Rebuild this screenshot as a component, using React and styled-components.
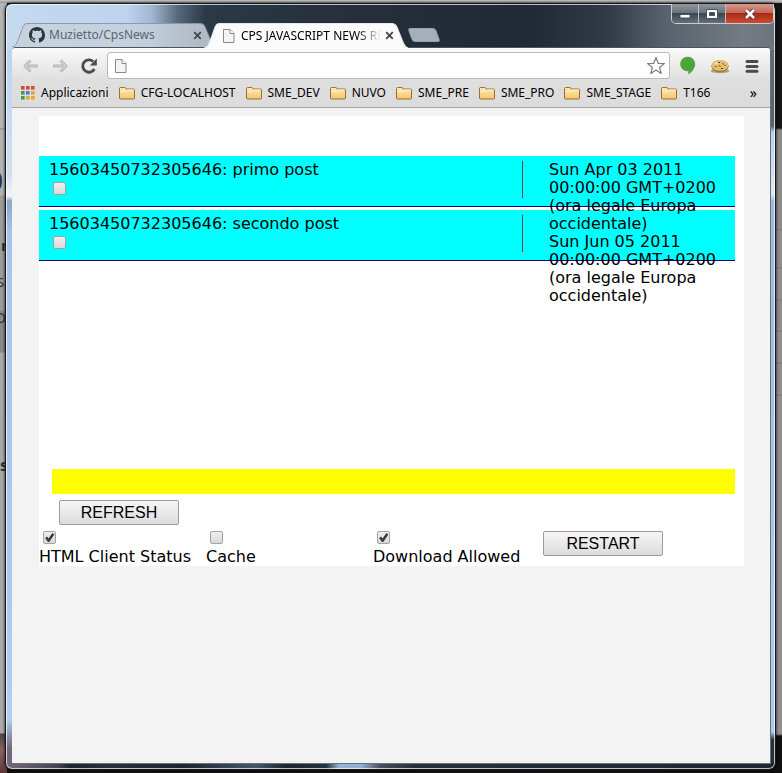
import React from "react";
import styled, { createGlobalStyle, css } from "styled-components";

const GlobalStyle = createGlobalStyle`
  *, *::before, *::after { box-sizing: border-box; }
  body { margin: 0; }
  button, input { font: inherit; color: inherit; }
`;

const ui = `"Noto Sans", "Open Sans", sans-serif`;
const verdana = `Verdana, "DejaVu Sans", sans-serif`;

const Desktop = styled.div`
  position: relative;
  display: flex;
  min-height: 100vh;
  padding: 3px 6px 3px 5px;
  overflow: hidden;
  font: 12px/16px ${ui};
  color: #000;
  background:
    linear-gradient(#c8c8c8, #8f8f8f) top / 100% 3px no-repeat,
    linear-gradient(
      #151515 0 128px, #8b8b8b 130px 229px, #777 230px, #8e8e8e 231px 267px, #777 268px,
      #909090 269px 299px, #777 300px, #8e8e8e 301px 330px, #777 331px, #909090 332px 362px,
      #777 363px, #8e8e8e 364px 394px, #777 395px, #909090 396px 734px, #101010 736px
    ) right / 7px 100% no-repeat,
    linear-gradient(
      #b5b5b5 0 128px, #8a8a8a 129px, #b4b4b4 130px 195px, #9c9c9c 196px 310px,
      #8a8a8a 311px 352px, #a9a9a9 353px 733px, #4b4545 734px, #8b6562 750px, #5d3535 773px
    ) left / 7px 100% no-repeat,
    #111;
`;

const Fragment = styled.span`
  position: absolute;
  left: ${(p) => p.$x}px;
  top: ${(p) => p.$y}px;
  font-size: ${(p) => p.$size}px;
  line-height: ${(p) => p.$size}px;
  font-weight: ${(p) => (p.$bold ? 700 : 400)};
  color: #333;
`;

const Window = styled.main`
  position: relative;
  flex: 1;
  min-width: 0;
  display: flex;
  flex-direction: column;
  border: 1px solid #15191e;
  border-radius: 7px;
  box-shadow: inset 0 0 0 1px rgba(255, 255, 255, 0.7), 0 0 3px #000;
  background:
    linear-gradient(
      90deg, #c5d9ef 0, #bed4ee 120px, #a3b9d3 145px, #56687b 172px, #2b3846 200px,
      #27323e 300px, #202935 520px, #303a46 600px, #59636e 660px, #747b83 740px, #6b737b 100%
    ) top / 100% 46px no-repeat,
    linear-gradient(
      90deg, #77697b 0, #4b4454 50px, #1c2530 65px, #27323e 100px, #1b2630 180px, #46586b 250px,
      #1b2630 280px, #24303c 320px, #93b3d6 333px 355px, #4b4a58 375px, #24303c 410px, #1d2833 100%
    ) bottom / 100% 7px no-repeat,
    linear-gradient(
      #bcd3ee 46px, #d0e0f2 170px, #f0f5fa 192px, #8da7c6 197px, #a8c4e6 230px,
      #acc9eb 600px, #b0d0ef 715px, #6f677a 745px
    ) left / 7px 100% no-repeat,
    linear-gradient(
      #626b74 46px, #59636d 122px, #b5cfea 128px, #dfeaf6 190px, #9db9dd 197px,
      #abc9ea 600px, #a9cbe9 728px, #25313c 736px
    ) right / 7px 100% no-repeat;
`;

const TitleBar = styled.header`
  display: flex;
  align-items: flex-end;
  height: 43px;
  padding: 0 1px 0 6px;
`;

const Tabs = styled.nav`
  display: flex;
  align-items: flex-end;
`;

const Tab = styled.div`
  position: relative;
  z-index: ${(p) => (p.$active ? 1 : 0)};
  display: flex;
  align-items: center;
  width: 204px;
  height: ${(p) => (p.$active ? 25 : 24)}px;
  margin: 0 -12px ${(p) => (p.$active ? -1 : 0)}px 0;
  padding: 0 11px 0 17px;
  color: ${(p) => (p.$active ? "#000" : "#5b6670")};
`;

const TabShape = styled.svg`
  position: absolute;
  inset: 0;
  width: 100%;
  height: 100%;
`;

const TabTitle = styled.button`
  position: relative;
  flex: 1;
  min-width: 0;
  display: flex;
  align-items: center;
  gap: 4px;
  padding: 0;
  border: 0;
  background: none;
  text-align: left;
  svg { flex: none; }
  span {
    flex: 1;
    overflow: hidden;
    white-space: nowrap;
    ${(p) =>
      p.$fade &&
      css`mask-image: linear-gradient(90deg, #000 calc(100% - 24px), transparent);`}
  }
`;

const IconButton = styled.button`
  position: relative;
  flex: none;
  display: flex;
  align-items: center;
  justify-content: center;
  width: ${(p) => p.$w || 16}px;
  height: ${(p) => p.$h || 16}px;
  padding: 0;
  border: 0;
  background: none;
`;

const NewTab = styled.button`
  width: 28px;
  height: 14px;
  margin: 0 0 5px 14px;
  padding: 0;
  border: 1px solid #9aa3ad;
  border-radius: 3px;
  background: #a6afb9;
  transform: skewX(20deg);
`;

const Controls = styled.div`
  display: flex;
  align-self: flex-start;
  margin-left: auto;
  height: 20px;
  border: 1px solid #c9ced3;
  border-top: 0;
  border-radius: 0 0 5px 5px;
  overflow: hidden;
`;

const Control = styled.button`
  display: flex;
  align-items: center;
  justify-content: center;
  width: ${(p) => (p.$danger ? 47 : 27)}px;
  padding: 0;
  border: 0;
  border-right: ${(p) => (p.$danger ? 0 : 1)}px solid #b9bfc5;
  background: ${(p) =>
    p.$danger
      ? "linear-gradient(#d79a8c, #c4685a 45%, #a92a17 50%, #cc4c31)"
      : "linear-gradient(#9097a0, #6b737d 45%, #3d4650 50%, #66707a)"};
`;

const Browser = styled.section`
  flex: 1;
  display: flex;
  flex-direction: column;
  margin: 0 4px 5px 6px;
  border: 1px solid #67717b;
  border-left-width: 0;
  border-top-color: #4b535c;
  border-radius: 4px 4px 0 0;
  background: #f3f3f3;
`;

const Chrome = styled.div`
  border-bottom: 1px solid #a5a5a5;
  border-radius: 3px 3px 0 0;
  background: linear-gradient(#fafafa, #dedede 34px, #dcdcdc);
`;

const Toolbar = styled.div`
  display: flex;
  align-items: center;
  height: 35px;
  padding: 0 5px 0 7px;
`;

const Nav = styled.div`
  display: flex;
  gap: 5px;
  margin-right: 6px;
`;

const Omnibox = styled.label`
  flex: 1;
  display: flex;
  align-items: center;
  height: 27px;
  padding: 0 3px 0 5px;
  border: 1px solid #b9b9b9;
  border-radius: 3px;
  background: #fff;
  input {
    flex: 1;
    min-width: 0;
    border: 0;
    outline: 0;
    background: none;
  }
`;

const Extensions = styled.div`
  display: flex;
  align-items: center;
  margin-left: 5px;
`;

const Bookmarks = styled.nav`
  display: flex;
  align-items: center;
  gap: 10px;
  height: 24px;
  padding: 0 13px 4px 9px;
`;

const Bookmark = styled.a`
  display: flex;
  align-items: center;
  gap: 6px;
  color: #000;
  text-decoration: none;
  white-space: nowrap;
  svg { flex: none; }
`;

const More = styled.button`
  margin-left: auto;
  padding: 0;
  border: 0;
  background: none;
  font-size: 14px;
`;

const Panel = styled.article`
  margin: 8px 26px 8px 27px;
  padding-top: 40px;
  background: #fff;
  font: 16px/18px ${verdana};
`;

const PostList = styled.div`
  display: flow-root;
  min-height: 313px;
  margin-right: 9px;
`;

const Post = styled.section`
  height: 51px;
  margin-bottom: 3px;
  padding: 5px 0 0 10px;
  border-bottom: 1px solid #00008b;
  background: #0ff;
`;

const PostTitle = styled.label`
  display: block;
  height: 37px;
  margin-right: 212px;
  border-right: 1px solid #4b4b4b;
`;

const PostDate = styled.time`
  float: right;
  clear: right;
  width: 186px;
`;

const Check = styled.input`
  appearance: none;
  display: block;
  width: 13px;
  height: 13px;
  margin: ${(p) => (p.$inPost ? "3px 0 0 4px" : "0 0 4px 4px")};
  border: 1px solid #a3a3a3;
  border-radius: 2px;
  background: linear-gradient(#efefef, #d9d9d9);
  &:checked::before {
    content: "";
    display: block;
    height: 11px;
    background: #3b3b3b;
    clip-path: polygon(10% 55%, 28% 42%, 42% 58%, 76% 8%, 94% 22%, 48% 90%, 36% 90%);
  }
`;

const StatusBar = styled.div`
  height: 25px;
  margin: 0 9px 6px 13px;
  background: #ff0;
`;

const PushButton = styled.button`
  width: 120px;
  height: 25px;
  padding: 0;
  border: 1px solid #9c9c9c;
  border-radius: 2px;
  background: linear-gradient(#f6f6f6, #dcdcdc);
  font: 16px/18px Arial, "Liberation Sans", sans-serif;
`;

const Actions = styled.div`
  display: flex;
  padding: 0 20px 6px;
`;

const Options = styled.div`
  display: grid;
  grid-template-columns: 167px 167px 170px 120px;
  align-items: start;
`;

const Option = styled.label`
  white-space: nowrap;
`;

const PageIcon = ({ size = 16 }) => (
  <svg width={size} height={size} viewBox="0 0 16 16" fill="#f4f4f4" stroke="#8a8a8a">
    <path d="M2.5 1.5h6.5l4 4v9H2.5z" />
    <path d="M9 1.5v4h4" fill="#fff" />
  </svg>
);

const GithubIcon = () => (
  <svg width="16" height="16" viewBox="0 0 16 16" fill="#2c3540">
    <path d="M8 0C3.58 0 0 3.58 0 8c0 3.54 2.29 6.53 5.47 7.59.4.07.55-.17.55-.38 0-.19-.01-.82-.01-1.49-2.01.37-2.53-.49-2.69-.94-.09-.23-.48-.94-.82-1.13-.28-.15-.68-.52-.01-.53.63-.01 1.08.58 1.23.82.72 1.21 1.87.87 2.33.66.07-.52.28-.87.51-1.07-1.78-.2-3.64-.89-3.64-3.95 0-.87.31-1.59.82-2.15-.08-.2-.36-1.02.08-2.12 0 0 .67-.21 2.2.82.64-.18 1.32-.27 2-.27s1.36.09 2 .27c1.53-1.04 2.2-.82 2.2-.82.44 1.1.16 1.92.08 2.12.51.56.82 1.27.82 2.15 0 3.07-1.87 3.75-3.65 3.95.29.25.54.73.54 1.48 0 1.07-.01 1.93-.01 2.2 0 .21.15.46.55.38A8.01 8.01 0 0 0 16 8c0-4.42-3.58-8-8-8z" />
  </svg>
);

const CloseIcon = () => (
  <svg width="9" height="9" viewBox="0 0 9 9" stroke="#4a4a4a" strokeWidth="1.9">
    <path d="M1.2 1.2l6.6 6.6M7.8 1.2L1.2 7.8" />
  </svg>
);

const ArrowIcon = ({ forward }) => (
  <svg width="18" height="16" viewBox="0 0 18 16" fill="none" strokeLinejoin="round">
    <g transform={forward ? "translate(18 0) scale(-1 1)" : undefined}>
      <path d="M16 8H3M8.500 2.500L3 8l5.500 5.500" stroke="#b4b4b4" strokeWidth="3" />
      <path d="M15.500 8H3.200M8.300 3L3.200 8l5.100 5" stroke="#d2d2d2" strokeWidth="1.200" />
    </g>
  </svg>
);

const ReloadIcon = () => (
  <svg width="18" height="18" viewBox="0 0 18 18">
    <path d="M14.400 12A6.200 6.200 0 1 1 13.200 4.500" fill="none" stroke="#4b4b4b" strokeWidth="2.800" />
    <path d="M16.800 1.500v7h-7z" fill="#4b4b4b" />
  </svg>
);

const StarIcon = () => (
  <svg width="20" height="20" viewBox="0 0 20 20" fill="#fff" stroke="#7d7d7d" strokeWidth="1.200" strokeLinejoin="round">
    <path d="M10 1.500l2.200 5.800 6.200.3-4.800 3.900 1.600 6-5.200-3.400-5.200 3.400 1.600-6-4.800-3.900 6.200-.3z" />
  </svg>
);

const BalloonIcon = () => (
  <svg width="16" height="19" viewBox="0 0 16 19">
    <path d="M8 .8a7.200 7.200 0 0 1 7.200 7.200c0 4.200-3.200 8.300-6.900 10.400v-3.300A7.200 7.200 0 1 1 8 .8z" fill="#4ca63b" />
  </svg>
);

const CookieIcon = () => (
  <svg width="20" height="16" viewBox="0 0 20 16">
    <ellipse cx="10" cy="13" rx="9.500" ry="2.200" fill="#a9a093" />
    <ellipse cx="10" cy="8.200" rx="8.600" ry="6" fill="#a87527" />
    <ellipse cx="10" cy="7.400" rx="8.400" ry="5.400" fill="#e3bd70" />
    <path d="M4 6l2-2 3 1-3 2z" fill="#f6dda0" />
    <path d="M5 8.500h1.500M8 4.500h2M12.500 5.500l1.500 1M14.500 8l1-1M9 7.500l1.500 1M11 10.500h2" stroke="#6b4618" />
  </svg>
);

const MenuIcon = () => (
  <svg width="14" height="14" viewBox="0 0 14 14" stroke="#4b4b4b" strokeWidth="3" strokeLinecap="round">
    <path d="M2 2.500h10M2 7.500h10M2 12.300h10" />
  </svg>
);

const FolderIcon = () => (
  <svg width="16" height="14" viewBox="0 0 16 14">
    <defs>
      <linearGradient id="folder" x2="0" y2="1">
        <stop stopColor="#ffebb4" />
        <stop offset="1" stopColor="#f5c46c" />
      </linearGradient>
    </defs>
    <path d="M.5 12V2.500q0-1 1-1h4.300q.8 0 1 1l.2.500h7.500q1 0 1 1v8q0 1-1 1H1.500q-1 0-1-1z" fill="url(#folder)" stroke="#96703a" />
    <path d="M1.500 5.500h5l1.500-1.500h6.500" fill="none" stroke="#fff5d3" />
  </svg>
);

const appColors = ["#d5483c", "#d5483c", "#d5483c", "#3f9a58", "#4285d8", "#e3ab2b", "#3f9a58", "#e3ab2b", "#e3ab2b"];
const AppsIcon = () => (
  <svg width="14" height="14" viewBox="0 0 14 14">
    {appColors.map((c, i) => (
      <rect key={i} x={(i % 3) * 5} y={Math.floor(i / 3) * 5} width="3.600" height="3.600" fill={c} />
    ))}
  </svg>
);

const folders = ["CFG-LOCALHOST", "SME_DEV", "NUVO", "SME_PRE", "SME_PRO", "SME_STAGE", "T166"];

const posts = [
  { id: "15603450732305646", title: "primo post", date: "Sun Apr 03 2011 00:00:00 GMT+0200 (ora legale Europa occidentale)" },
  { id: "15603450732305646", title: "secondo post", date: "Sun Jun 05 2011 00:00:00 GMT+0200 (ora legale Europa occidentale)" },
];

function BrowserTab({ active, icon, children }) {
  return (
    <Tab $active={active}>
      <TabShape viewBox="0 0 204 25" preserveAspectRatio="none" aria-hidden="true">
        <path
          d="M0 25C4 24 4 22 6 18L11 4Q12 .5 15 .5H188Q192 .5 193 4L199 19Q201 24 204 25"
          fill={active ? "#fbfbfb" : "#c6d0db"}
          fillOpacity={active ? 1 : 0.86}
          stroke={active ? "#e8e8e8" : "#8b98a6"}
        />
      </TabShape>
      <TabTitle $fade={active}>
        {icon}
        <span>{children}</span>
      </TabTitle>
      <IconButton aria-label="Close tab"><CloseIcon /></IconButton>
    </Tab>
  );
}

export default function App() {
  return (
    <Desktop>
      <GlobalStyle />
      <div aria-hidden="true">
        <Fragment $x={-24} $y={163} $size={36}>O</Fragment>
        <Fragment $x={1} $y={238} $size={15} $bold>n</Fragment>
        <Fragment $x={-3} $y={276} $size={13}>Su</Fragment>
        <Fragment $x={-5} $y={311} $size={14}>O</Fragment>
        <Fragment $x={0} $y={457} $size={16} $bold>s</Fragment>
      </div>
      <Window>
        <TitleBar>
          <Tabs>
            <BrowserTab icon={<GithubIcon />}>Muzietto/CpsNews</BrowserTab>
            <BrowserTab active icon={<PageIcon />}>CPS JAVASCRIPT NEWS READER</BrowserTab>
            <NewTab aria-label="New tab" />
          </Tabs>
          <Controls>
            <Control aria-label="Minimize">
              <svg width="12" height="12" viewBox="0 0 12 12"><rect x="1" y="6.500" width="10" height="3.500" fill="#fff" stroke="#4b535c" /></svg>
            </Control>
            <Control aria-label="Maximize">
              <svg width="12" height="12" viewBox="0 0 12 12"><path d="M.5 1.500h11v9H.5zM3.500 4.500v3h5v-3z" fill="#fff" fillRule="evenodd" stroke="#4b535c" /></svg>
            </Control>
            <Control aria-label="Close" $danger>
              <svg width="14" height="12" viewBox="0 0 14 12"><path d="M3 2l8 8M11 2l-8 8" stroke="#5b2b2b" strokeWidth="4.400" /><path d="M3 2l8 8M11 2l-8 8" stroke="#fff" strokeWidth="2.600" /></svg>
            </Control>
          </Controls>
        </TitleBar>
        <Browser>
          <Chrome>
            <Toolbar>
              <Nav>
                <IconButton $w={24} $h={24} aria-label="Back"><ArrowIcon /></IconButton>
                <IconButton $w={24} $h={24} aria-label="Forward"><ArrowIcon forward /></IconButton>
                <IconButton $w={24} $h={24} aria-label="Reload"><ReloadIcon /></IconButton>
              </Nav>
              <Omnibox>
                <PageIcon />
                <input type="text" aria-label="Address" />
                <StarIcon />
              </Omnibox>
              <Extensions>
                <IconButton $w={26} $h={24} aria-label="Messages"><BalloonIcon /></IconButton>
                <IconButton $w={38} $h={24} aria-label="Cookies"><CookieIcon /></IconButton>
                <IconButton $w={26} $h={24} aria-label="Menu"><MenuIcon /></IconButton>
              </Extensions>
            </Toolbar>
            <Bookmarks>
              <Bookmark href="#apps"><AppsIcon />Applicazioni</Bookmark>
              {folders.map((name) => (
                <Bookmark key={name} href={`#${name}`}><FolderIcon />{name}</Bookmark>
              ))}
              <More aria-label="More bookmarks">»</More>
            </Bookmarks>
          </Chrome>
          <Panel>
            <PostList>
              {posts.map((post) => (
                <Post key={post.title}>
                  <PostDate>{post.date}</PostDate>
                  <PostTitle>
                    {post.id}: {post.title}
                    <Check type="checkbox" $inPost />
                  </PostTitle>
                </Post>
              ))}
            </PostList>
            <StatusBar />
            <Actions><PushButton>REFRESH</PushButton></Actions>
            <Options>
              <Option><Check type="checkbox" defaultChecked />HTML Client Status</Option>
              <Option><Check type="checkbox" />Cache</Option>
              <Option><Check type="checkbox" defaultChecked />Download Allowed</Option>
              <PushButton>RESTART</PushButton>
            </Options>
          </Panel>
        </Browser>
      </Window>
    </Desktop>
  );
}
